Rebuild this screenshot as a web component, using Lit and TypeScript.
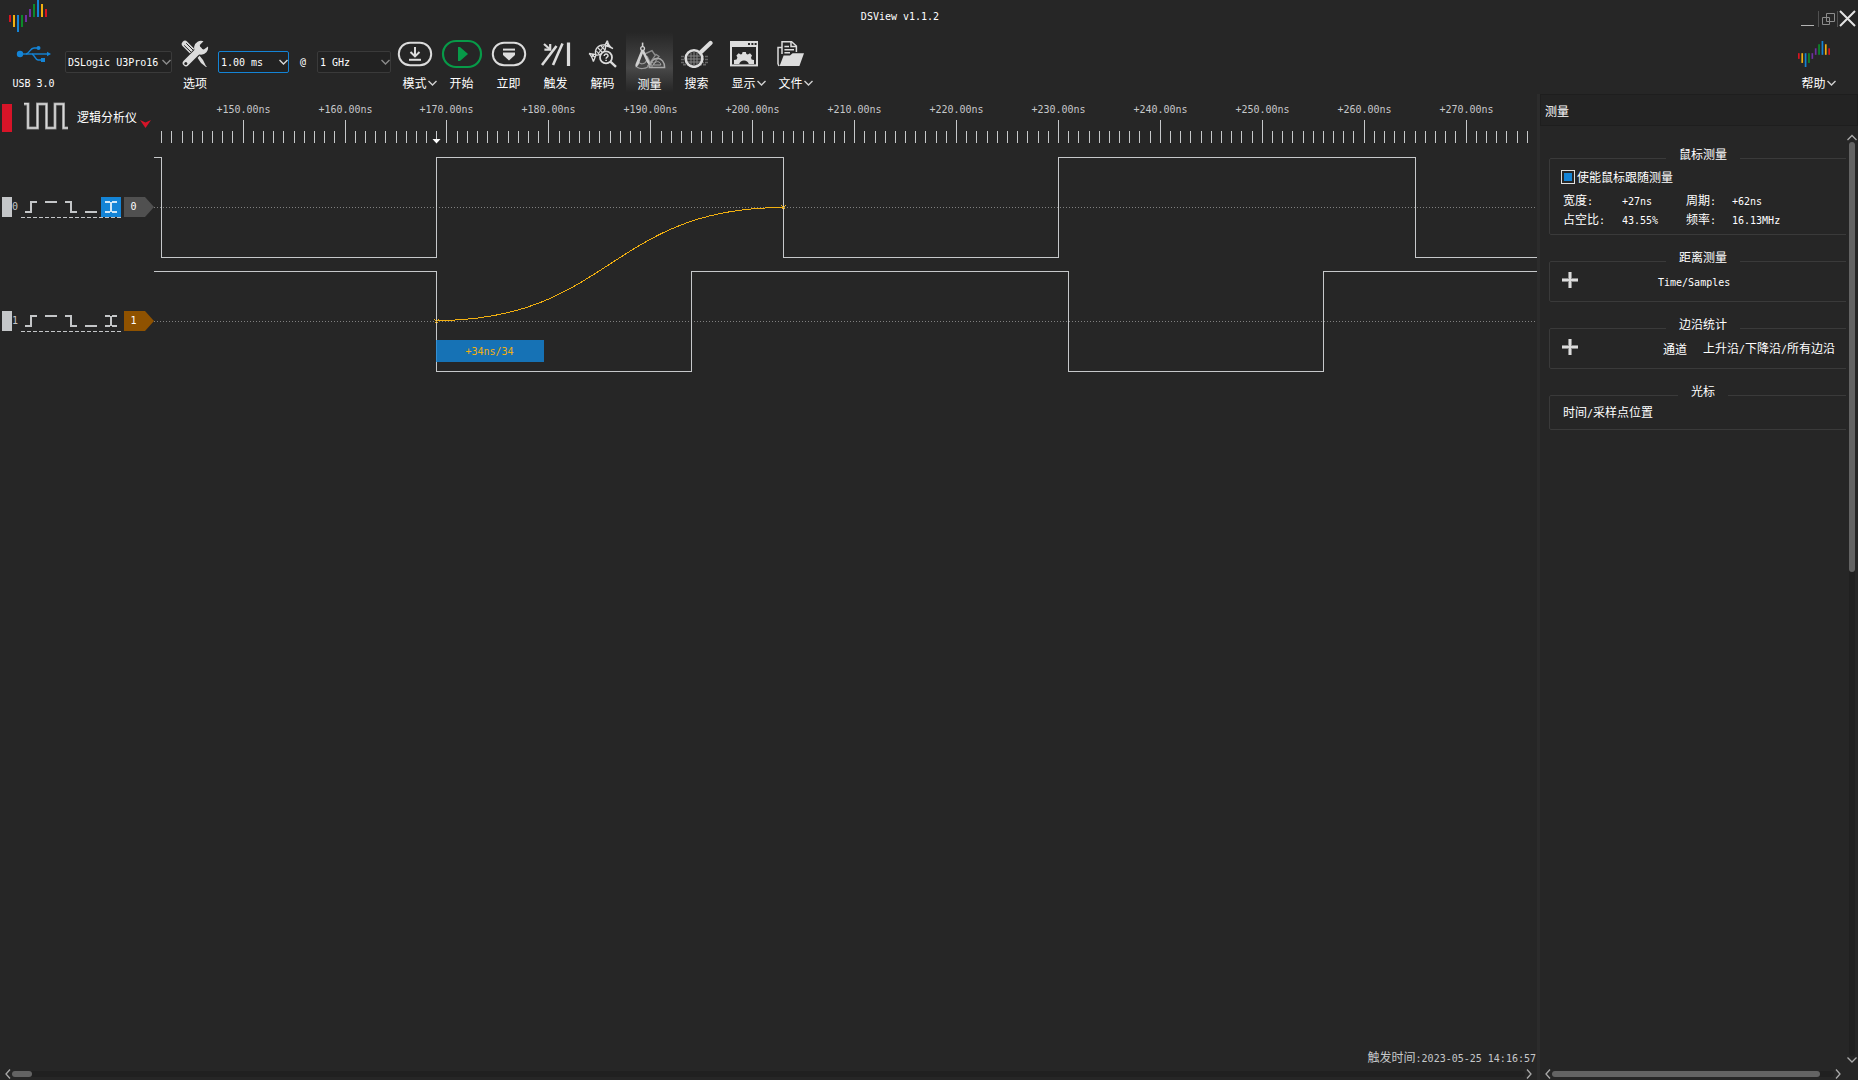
import { LitElement, html, svg, css, nothing } from "lit";
import { customElement, property } from "lit/decorators.js";
import { classMap } from "lit/directives/class-map.js";

const textStyles = css`
  * { box-sizing: border-box; }
  button { background: none; border: 0; padding: 0; margin: 0; color: inherit; font: inherit; cursor: pointer; }
  svg { display: block; flex: none; }
  .latin { font-family: "DejaVu Sans Mono", monospace; font-size: 10px; white-space: pre; }
`;

/* Latin runs are set in the monospaced face, ideographs in the CJK face. */
const mixed = (text: string) =>
  text
    .split(/([\x20-\x7e]+)/)
    .filter((part) => part)
    .map((part) => (/^[\x20-\x7e]/.test(part) ? html`<span class="latin">${part}</span>` : part));

const chevronIcon = (color = "#d0d0d0") => html`<svg width="11" height="8" aria-hidden="true">
  <path d="M1.5 2 L5.5 6 L9.5 2" fill="none" stroke=${color} stroke-width="1.4"/></svg>`;

const RED = "#d7141f", YEL = "#f2b010", BLU = "#1484d6", GRN = "#0c8a2a", PUR = "#6f2fa0";
const logoBars: [number, number, number, string][] = [
  [0, 15, 7, RED], [4, 15, 12, YEL], [8, 15, 17, BLU], [12, 15, 12, GRN], [16, 15, 7, PUR],
  [20, 9, 8, PUR], [24, 4, 13, GRN], [28, 0, 17, BLU], [32, 4, 13, YEL], [36, 9, 8, RED],
];
const bars = logoBars.map(([x, y, h, c]) => svg`<rect x="${x}" y="${y}" width="2" height="${h}" fill="${c}"/>`);

const ink = "#dcdcdc";
const icons: Record<string, unknown> = {
  usb: html`<svg width="36" height="18" viewBox="0 0 36 18" fill="none" stroke="#1484d6" stroke-width="1.4">
    <circle cx="4" cy="9" r="3.2" fill="#1484d6" stroke="none"/><path d="M6 9 H32"/><path d="M31 6.8 L35 9 L31 11.2 Z" fill="#1484d6" stroke="none"/>
    <path d="M10 9 C14 8 14 3 18 3 H22"/><circle cx="22.5" cy="3" r="2" fill="#1484d6" stroke="none"/>
    <path d="M16 9 C19 10 19 15 22 15 H25"/><rect x="25" y="13" width="4" height="4" fill="#1484d6" stroke="none"/></svg>`,
  options: html`<svg width="28" height="28" viewBox="0 0 28 28">
    <path d="M4 4 L12 12" stroke="${ink}" stroke-width="6.4" stroke-linecap="round"/>
    <path d="M3.2 5.4 L11 13 M5.2 3.2 L13 11" stroke="#262626" stroke-width="1"/>
    <path d="M16 17 L18 15 L22 20 L25 26 L26 26.6 L25 27 L20 23 Z" fill="${ink}"/>
    <path d="M5 24 L17 11" stroke="#262626" stroke-width="8.5" stroke-linecap="round"/>
    <path d="M5 23 L18 10" stroke="${ink}" stroke-width="6.6" stroke-linecap="round"/>
    <path d="M22.5 1.2 A7 7 0 1 0 27 6.6 L22.8 9.4 L19.4 8.4 L18.8 5 Z" fill="${ink}"/>
    <circle cx="4.8" cy="23.4" r="1.5" fill="#262626"/></svg>`,
  mode: html`<svg width="36" height="26" viewBox="0 0 36 26" fill="none" stroke="${ink}" stroke-width="2">
    <rect x="1.8" y="1.8" width="32.4" height="22.4" rx="11.2"/>
    <path d="M18 6 V15"/><path d="M13.5 11 L18 15.4 L22.5 11"/><path d="M12 18.8 H24"/></svg>`,
  start: html`<svg width="42" height="30" viewBox="0 0 42 30"><rect x="2" y="2" width="38" height="26" rx="13" fill="none" stroke="#079a48" stroke-width="2.2"/>
    <path d="M17 8 H19 L27 15 L19 22 H17 Z" fill="#079a48"/></svg>`,
  instant: html`<svg width="36" height="26" viewBox="0 0 36 26" fill="none" stroke="${ink}" stroke-width="2">
    <rect x="1.8" y="1.8" width="32.4" height="22.4" rx="11.2"/><path d="M12 8.6 H24"/>
    <path d="M12 11.4 H24 V14 L18 19.6 L12 14 Z" fill="${ink}" stroke="none"/></svg>`,
  trigger: html`<svg width="30" height="26" viewBox="0 0 30 26" fill="none" stroke="${ink}" stroke-width="2.6">
    <path d="M1 24 L15.5 5"/><path d="M12 24 L21.5 2.5"/><path d="M27.5 1.5 V25" stroke-width="3.2"/>
    <path d="M3 3 L8.6 8" stroke-width="2.2"/><path d="M9.2 3 V8.6 H3.4" stroke-width="2.2"/></svg>`,
  decode: html`<svg width="30" height="28" viewBox="0 0 30 28" fill="none" stroke="${ink}" stroke-width="1.3">
    <path d="M8 15 C6 10 10 4 17 5 C19 10 14 16 8 15 Z"/>
    <path d="M10 8 L15 13 M13 6 L17 10 M8.4 11 L12 15 M10 14 L16 6" stroke-width="1.1"/>
    <path d="M8 14.6 L1 13.4 M8 15 L5.4 21.6 M1 13.4 C3 15 4.4 18 5.4 21.6 M3.4 13.8 L7 17.6 M6 14 L3.6 17.2"/>
    <path d="M17 5 L19.4 .6 M17.4 5.2 L25 8.6 M19.4 .6 C20 4 22 7 25 8.6 M18.4 3 L22 7 M20 4 L18.6 7"/>
    <circle cx="18" cy="17.4" r="6" fill="#262626" stroke-width="1.8"/>
    <path d="M16.2 16 C16.2 13.2 20.2 13.4 20 16 C19.8 17.4 18.1 17 18.1 18.8 M18.1 19.8 V21" stroke-width="1.5"/>
    <path d="M22.4 21.6 L28 26.8" stroke-width="2.4"/></svg>`,
  measure: html`<svg width="32" height="28" viewBox="0 0 32 28" fill="none">
    <path d="M10.6 12 L18 8.6 L21 13 M13 14 L18 24" stroke="#8c8c8c" stroke-width="1.4"/>
    <path d="M13.4 24.4 L22 12.4 L25 14.4 L17 26" stroke="#8c8c8c" stroke-width="1.3"/><path d="M17 19.4 L19.4 21 M19.4 16.4 L21.6 18" stroke="#8c8c8c" stroke-width="1.2"/>
    <path d="M15.4 25.4 H30.6 C30.6 20 27.6 16.4 23.4 16.2 C19.6 16.4 16.6 19.6 15.4 25.4 Z" stroke="#a8a8a8" stroke-width="1.5"/>
    <path d="M19.6 23 H26.8 C26.6 18.6 20.4 18.6 19.6 23 Z" stroke="#a8a8a8"/>
    <path d="M1.6 22.6 C3 28 14 28 15.6 21.6 C14 18 13 18 12 17.6 M4.6 20 C6 22.6 11 22.6 12.4 18.6" stroke="#9a9a9a" stroke-width="1.2"/>
    <path d="M8.6 .6 V5" stroke="#d0d0d0" stroke-width="1.6"/><circle cx="8.6" cy="6.6" r="1.9" stroke="#d0d0d0" stroke-width="1.3"/>
    <path d="M7.2 8.2 L1.6 22 L1.8 25.4 L4.4 23 L8.8 11.4 L13 20.6 L15.6 23.4 L15.6 20 L10 8.2 Z" fill="#d0d0d0"/></svg>`,
  search: html`<svg width="32" height="28" viewBox="0 0 32 28" fill="none">
    <path d="M0 16.5 H27 M0 19.5 H27 M0 22.5 H27 M2 24.6 H25" stroke="#666" stroke-width="1.6" stroke-dasharray="3 1"/>
    <circle cx="13" cy="18.5" r="8.3" fill="#303030" stroke="${ink}" stroke-width="2.6"/>
    <path d="M7 16 H19 M6 19 H20 M7 22 H19 M10 12.5 V25 M13 11 V26 M16 12.5 V25" stroke="#868686" stroke-width="1"/>
    <path d="M19.5 12.6 L29.5 3" stroke="${ink}" stroke-width="4.2" stroke-linecap="round"/></svg>`,
  display: html`<svg width="30" height="28" viewBox="0 0 30 28">
    <rect x="2" y="2" width="26" height="23.4" fill="none" stroke="${ink}" stroke-width="2"/><path d="M1 2 H29 V7 H1 Z" fill="${ink}"/>
    <path d="M19 3 h2 v2 h-2z M22.4 3 h2 v2 h-2z M25.6 3 h2 v2 h-2z" fill="#262626"/>
    <path d="M5 24 V20 L7.6 19.4 L8.4 17.6 L7.4 15.4 L9.6 13.2 L11.8 14.4 L13 14 L13.6 12 H16.8 L17.4 14 L18.8 14.4 L21 13.2 L23 15.4 L22 17.6 L22.6 19.4 L25 20 V24 H19.8 A5 5 0 0 0 10.2 24 Z" fill="${ink}"/></svg>`,
  file: html`<svg width="30" height="28" viewBox="0 0 30 28" fill="none" stroke="${ink}" stroke-width="1.5">
    <path d="M6 14 V1.8 H15.6 L20.4 6 V12"/><path d="M15 2 V6.4 H20"/><path d="M2 24 V7.6 H6"/><path d="M8.4 6.6 H13 M8.4 9.8 H18 M8.4 12.8 H14"/>
    <path d="M3.6 26 L7.6 15.6 H14 L16.6 13.2 H28 L23.4 26 Z" fill="${ink}" stroke="none"/><path d="M2 24 L3 26"/></svg>`,
  help: html`<svg width="32" height="26" viewBox="0 0 38 32" preserveAspectRatio="none">${bars}</svg>`,
};

@customElement("tool-button")
class ToolButton extends LitElement {
  @property() icon = "";
  @property() label = "";
  @property({ type: Boolean }) menu = false;
  @property({ type: Boolean }) active = false;
  static styles = [textStyles, css`
    :host { display: block; flex: none; width: 47px; }
    .tool { display: flex; flex-direction: column; align-items: center; width: 100%; height: 60px; padding-top: 4px; }
    .tool.active { padding-top: 6px; background: linear-gradient(#262626, #484848 60%, #262626); }
    .icon { height: 36px; display: flex; align-items: center; }
    .label { display: flex; align-items: center; justify-content: center; height: 16px; margin-top: 3px; line-height: 16px; white-space: nowrap; }
    .arrow { margin-right: -11px; }
  `];
  render() {
    return html`<button class=${classMap({ tool: true, active: this.active })}>
      <span class="icon">${icons[this.icon]}</span>
      <span class="label">${mixed(this.label)}${this.menu ? html`<span class="arrow">${chevronIcon()}</span>` : nothing}</span>
    </button>`;
  }
}

@customElement("tool-select")
class ToolSelect extends LitElement {
  @property() value = "";
  @property() label = "";
  @property({ type: Boolean }) focused = false;
  static styles = [textStyles, css`
    :host { display: block; flex: none; }
    .box { display: grid; align-items: center; height: 22px; }
    .box > * { grid-area: 1 / 1; }
    .field { width: 100%; height: 22px; padding: 0 2px; border: 1px solid #3a3a3a; border-radius: 2px; background: #222; color: #fff; appearance: none; outline: 0;
      font-family: "DejaVu Sans Mono", monospace; font-size: 10px; }
    .field.focused { border-color: #1484d6; }
    .arrow { justify-self: end; pointer-events: none; }
  `];
  render() {
    return html`<div class="box"><select class=${classMap({ field: true, focused: this.focused })} aria-label=${this.label}><option>${this.value}</option></select>
      <span class="arrow">${chevronIcon(this.focused ? "#d8d8d8" : "#8c8c8c")}</span></div>`;
  }
}

@customElement("scroll-track")
class ScrollTrack extends LitElement {
  @property() axis = "x";
  @property() thumb = "10%";
  static styles = css`
    :host { display: block; }
    .bar { display: flex; align-items: center; width: 100%; height: 100%; }
    .bar.y { flex-direction: column; }
    .track { flex: 1; display: flex; border-radius: 3px; background: #202020; height: 6px; }
    .y .track { width: 6px; height: auto; flex-direction: column; }
    .thumb { border-radius: 3px; background: #636363; flex: none; }
    .cap { background: none; border: 0; padding: 0; display: flex; }
    svg { display: block; }
  `;
  render() {
    const y = this.axis === "y";
    const cap = (name: string, w: number, h: number, d: string) => html`<button class="cap" aria-label=${name}>
      <svg width=${w} height=${h}><path d=${d} fill="none" stroke="#aaa" stroke-width="1.3"/></svg></button>`;
    return html`<div class="bar ${this.axis}">
      ${y ? cap("向上", 12, 8, "M1.5 6 L6 1.5 L10.5 6") : cap("向左", 8, 12, "M6 1.5 L2 6 L6 10.5")}
      <div class="track"><div class="thumb" style=${y ? `height:${this.thumb}` : `width:${this.thumb}`}></div></div>
      ${y ? cap("向下", 12, 8, "M1.5 1.5 L6 6 L10.5 1.5") : cap("向右", 8, 12, "M2 1.5 L6 6 L2 10.5")}
    </div>`;
  }
}

@customElement("channel-row")
class ChannelRow extends LitElement {
  @property() name = "0";
  @property() color = "#505050";
  @property({ type: Number }) selected = -1;
  static styles = [textStyles, css`
    :host { display: block; }
    .row { display: flex; height: 22px; color: #c4c4c4; }
    .grip { width: 10px; height: 20px; background: #c4c6c8; }
    .index { width: 9px; line-height: 20px; }
    .edges { display: flex; height: 21px; position: relative; padding-bottom: 1px; }
    .edge { width: 20px; height: 20px; }
    .edge.on { background: #1484d6; }
    .rule { position: absolute; left: 0; top: 20px; }
    .tag { display: grid; margin-left: 3px; height: 20px; color: #fff; }
    .tag > * { grid-area: 1 / 1; }
    .text { width: 19px; text-align: center; line-height: 20px; }
  `];
  render() {
    const shapes = ["M4 15 H10 V5 H16", "M4 5 H16", "M4 5 H10 V15 H16", "M4 15 H16", "M4 5 H9 M11 5 H16 M4 15 H9 M11 15 H16 M10 5 V15"];
    const names = ["上升沿", "高电平", "下降沿", "低电平", "双边沿"];
    return html`<div class="row"><span class="grip"></span><span class="index latin">${this.name}</span>
      <span class="edges">${shapes.map((d, i) => html`<button class=${classMap({ edge: true, on: i === this.selected })} aria-label=${names[i]}>
        <svg width="20" height="20"><path d=${d} fill="none" stroke=${i === this.selected ? "#cfe6f7" : "#c4c6c8"} stroke-width="2"/></svg></button>`)}
        <svg class="rule" width="100" height="1"><path d="M0 .5 H100" stroke="#c4c6c8" stroke-dasharray="4 2"/></svg></span>
      <span class="tag"><svg width="30" height="20"><path d="M0 0 H21 L30 10 L21 20 H0 Z" fill=${this.color}/></svg><span class="text latin">${this.name}</span></span></div>`;
  }
}

/* Time axis in nanoseconds: pixel column of a time inside the plot. */
const firstNs = 142;
const lastNs = 276;
const xOf = (ns: number) => Math.floor(7.65 + (ns - firstNs) * 10.191) + 0.5;

@customElement("wave-plot")
class WavePlot extends LitElement {
  static styles = [textStyles, css`
    :host { display: block; flex: 1; min-width: 0; overflow: hidden; }
    .plot { width: 100%; height: 100%; }
    .tick, .wave { stroke: #c6c8ca; fill: none; shape-rendering: crispEdges; }
    .time { fill: #c6c8ca; text-anchor: middle; }
    .base { stroke: #808080; stroke-dasharray: 1 2; shape-rendering: crispEdges; }
    .link { stroke: #f2b010; fill: none; shape-rendering: crispEdges; }
    .tip { fill: #1484d6; fill-opacity: 0.82; }
    .tip-text { fill: #f2b010; text-anchor: middle; }
  `];
  private wave(edges: number[], top: number, bottom: number) {
    let high = true;
    let d = `M0 ${top}`;
    for (const ns of edges) {
      high = !high;
      d += ` H${xOf(ns)} V${high ? top : bottom}`;
    }
    return svg`<path class="wave" d="${d} H4000"/>`;
  }
  render() {
    const ticks = Array.from({ length: lastNs - firstNs + 1 }, (_, i) => firstNs + i);
    const x0 = xOf(169), x1 = xOf(203), mid = (x0 + x1) / 2;
    return html`<svg class="plot">
      ${ticks.map((t) => svg`<path class="tick" d="M${xOf(t)} ${t % 10 ? 37 : 26} V49"/>`)}
      ${ticks.filter((t) => t % 10 === 0).map((t) => svg`<text class="time latin" x="${xOf(t)}" y="19">+${t}.00ns</text>`)}
      <path d="M${x0 - 4} 45 H${x0 + 4} L${x0} 49.5 Z" fill="#fff"/>
      <path class="base" d="M0 113.5 H4000 M0 227.5 H4000"/>
      ${this.wave([142, 169, 203, 230, 265], 63.5, 163.5)}
      ${this.wave([169, 194, 231, 256], 177.5, 277.5)}
      <path class="link" d="M${x0} 226.5 C${mid} 226.5 ${mid} 113.5 ${x1} 113.5"/>
      ${[[x0, 227.5], [x1, 113.5]].map(([x, y]) => svg`<path class="link" d="M${x - 2} ${y - 2} l4 4 m0 -4 l-4 4"/>`)}
      <rect class="tip" x="${x0 - 0.5}" y="246" width="108" height="22"/>
      <text class="tip-text latin" x="${x0 + 53}" y="261">+34ns/34</text>
    </svg>`;
  }
}

@customElement("measure-dock")
class MeasureDock extends LitElement {
  static styles = [textStyles, css`
    :host { display: flex; flex-direction: column; flex: none; width: 318px; }
    .head { height: 32px; padding-left: 4px; border: 1px solid #1e1e1e; background: #232323; line-height: 32px; font-weight: 400; font-size: 12px; margin: 0; }
    .middle { flex: 1; display: flex; min-height: 0; }
    .groups { flex: 1; min-width: 0; overflow: hidden; padding: 20px 0 0 9px; }
    .group { width: 308px; margin: 0 0 14px; padding: 0 11px; border: 1px solid #3a3a3a; border-radius: 2px; min-width: 0; }
    .name { margin: 0 auto; padding: 0 13px 8px; line-height: 16px; }
    .check { display: flex; align-items: center; gap: 2px; height: 14px; line-height: 14px; }
    .tick { appearance: none; width: 14px; height: 14px; margin: 0; border: 1px solid #e0e0e0; background: #1484d6; background-clip: content-box; padding: 2px; }
    .values { display: grid; grid-template-columns: 59px 64px 46px auto; grid-template-rows: 19px 19px; padding: 6px 0 6px 2px; line-height: 19px; margin: 0; }
    .values dd, .values dt { margin: 0; }
    .line { display: flex; align-items: center; height: 18px; margin-bottom: 10px; }
    .add { margin: -4px 0 0 1px; }
    .single { margin-left: 80px; }
    .first { margin-left: 85px; }
    .second { margin-left: 16px; white-space: nowrap; }
    .place { margin-top: -4px; padding-left: 2px; line-height: 18px; height: 26px; }
    .vertical { width: 12px; margin: 8px 0 4px; }
    .foot { height: 12px; padding: 0 16px 0 4px; }
    .horizontal { height: 12px; }
  `];
  private group(name: string, body: unknown) {
    return html`<fieldset class="group"><legend class="name">${name}</legend>${body}</fieldset>`;
  }
  private add(name: string) {
    return html`<button class="add" aria-label=${name}><svg width="16" height="16"><path d="M8 0 V16 M0 8 H16" stroke="#8a8a8a" stroke-width="4"/><path d="M8 0 V16 M0 8 H16" stroke="#dcdcdc" stroke-width="2"/></svg></button>`;
  }
  render() {
    const values = [["宽度:", "+27ns"], ["周期:", "+62ns"], ["占空比:", "43.55%"], ["频率:", "16.13MHz"]];
    return html`<h2 class="head">测量</h2>
      <div class="middle"><div class="groups">
        ${this.group("鼠标测量", html`<label class="check"><input class="tick" type="checkbox" checked />使能鼠标跟随测量</label>
          <dl class="values">${values.map(([k, v]) => html`<dt>${mixed(k)}</dt><dd>${mixed(v)}</dd>`)}</dl>`)}
        ${this.group("距离测量", html`<div class="line">${this.add("添加距离测量")}<span class="single">${mixed("Time/Samples")}</span></div>`)}
        ${this.group("边沿统计", html`<div class="line">${this.add("添加边沿统计")}<span class="first">通道</span><span class="second">${mixed("上升沿/下降沿/所有边沿")}</span></div>`)}
        ${this.group("光标", html`<div class="place">${mixed("时间/采样点位置")}</div>`)}
      </div><scroll-track class="vertical" axis="y" thumb="47%"></scroll-track></div>
      <div class="foot"><scroll-track class="horizontal" thumb="95%"></scroll-track></div>`;
  }
}

@customElement("app-root")
class AppRoot extends LitElement {
  static styles = [textStyles, css`
    :host { display: flex; flex-direction: column; height: 100vh; overflow: hidden; background: #262626; color: #fff;
      font-family: "Noto Sans CJK SC", sans-serif; font-size: 12px; line-height: 16px; }
    .title { display: grid; grid-template-columns: 1fr auto; height: 32px; flex: none; }
    .brand { grid-area: 1 / 1; padding-left: 9px; }
    .name { grid-area: 1 / 1; justify-self: center; padding-top: 9px; }
    .window { display: flex; justify-content: flex-end; padding: 6px 1px 0 0; }
    .tools { display: flex; height: 62px; flex: none; }
    .usb { width: 65px; padding-left: 2px; display: flex; flex-direction: column; align-items: center; padding-top: 13px; }
    .usb-label { margin-top: 13px; }
    .select { margin-top: 19px; }
    .device { width: 107px; }
    .span { width: 71px; }
    .rate { width: 74px; }
    .options { width: 46px; }
    .at { width: 28px; padding-top: 22px; text-align: center; }
    .space { flex: 1; }
    .help { margin-right: 21px; }
    .main { display: flex; flex: 1; min-height: 0; }
    .view { display: flex; flex-direction: column; flex: 1; min-width: 0; }
    .canvas { display: flex; flex: 1; min-height: 0; }
    .channels { width: 154px; flex: none; padding-left: 2px; display: flex; flex-direction: column; }
    .device-row { display: flex; height: 48px; margin-bottom: 55px; padding-top: 8px; }
    .mark { width: 10px; height: 28px; margin-top: 2px; background: #d71428; }
    .square { margin-left: 12px; }
    .device-name { margin: 7px 0 0 8px; }
    .drop { margin: 18px 0 0 3px; height: 8px; }
    .channel { height: 22px; margin-bottom: 92px; }
    .status { height: 16px; line-height: 14px; padding-right: 1px; text-align: right; color: #c6c8ca; margin-bottom: 2px; }
    .scroll { height: 12px; margin: 0 4px; }
    .divider { width: 3px; background: #2c2c2c; flex: none; }
  `];
  render() {
    const tools: [string, string, boolean][] = [
      ["mode", "模式", true], ["start", "开始", false], ["instant", "立即", false], ["trigger", "触发", false], ["decode", "解码", false],
      ["measure", "测量", false], ["search", "搜索", false], ["display", "显示", true], ["file", "文件", true],
    ];
    return html`
      <header class="title">
        <div class="brand"><svg width="38" height="32">${bars}</svg></div>
        <div class="name latin">DSView v1.1.2</div>
        <div class="window">
          <button aria-label="最小化"><svg width="18" height="18"><path d="M1 15.5 H14" stroke="#b4b4b4"/></svg></button>
          <button aria-label="还原"><svg width="20" height="18" fill="none" stroke="#8c8c8c"><path d="M.5 1 V17 M19.5 1 V17" stroke="#505050"/><path d="M8.5 3.5 h8 v8 h-8z M4.5 7.5 h7 v7 h-7z"/></svg></button>
          <button aria-label="关闭"><svg width="19" height="18"><path d="M2 1 L17 16 M17 1 L2 16" stroke="#e4e4e4" stroke-width="2"/></svg></button>
        </div>
      </header>
      <nav class="tools">
        <div class="usb">${icons.usb}<span class="usb-label latin">USB 3.0</span></div>
        <tool-select class="select device" label="设备" value="DSLogic U3Pro16"></tool-select>
        <tool-button class="options" icon="options" label="选项"></tool-button>
        <tool-select class="select span" label="时长" value="1.00 ms" focused></tool-select>
        <span class="at latin">@</span>
        <tool-select class="select rate" label="采样率" value="1 GHz"></tool-select>
        ${tools.map(([icon, label, menu]) => html`<tool-button icon=${icon} label=${label} ?menu=${menu} ?active=${icon === "measure"}></tool-button>`)}
        <span class="space"></span>
        <tool-button class="help" icon="help" label="帮助" menu></tool-button>
      </nav>
      <main class="main">
        <section class="view">
          <div class="canvas">
            <div class="channels">
              <div class="device-row"><span class="mark"></span>
                <svg class="square" width="45" height="28" fill="none"><path d="M0 2 H4 V26 H13.5 V2 H22.5 V26 H31 V2 H39.5 V26 H44" stroke="#8a8a8a" stroke-width="3"/><path d="M0 1.8 H4 V26 H13.5 V2 H22.5 V26 H31 V2 H39.5 V26 H44" stroke="#d8d8d8" stroke-width="1.6"/></svg>
                <span class="device-name">逻辑分析仪</span>
                <button class="drop" aria-label="展开"><svg width="11" height="8"><path d="M0 0 L5.5 2.5 L11 0 L5.5 8 Z" fill="#d71428"/></svg></button>
              </div>
              <channel-row class="channel" name="0" color="#505050" selected="4"></channel-row>
              <channel-row class="channel" name="1" color="#8f5200"></channel-row>
            </div>
            <wave-plot></wave-plot>
          </div>
          <div class="status">${mixed("触发时间:2023-05-25 14:16:57")}</div>
          <scroll-track class="scroll" thumb="20px"></scroll-track>
        </section>
        <div class="divider"></div>
        <measure-dock></measure-dock>
      </main>`;
  }
}
